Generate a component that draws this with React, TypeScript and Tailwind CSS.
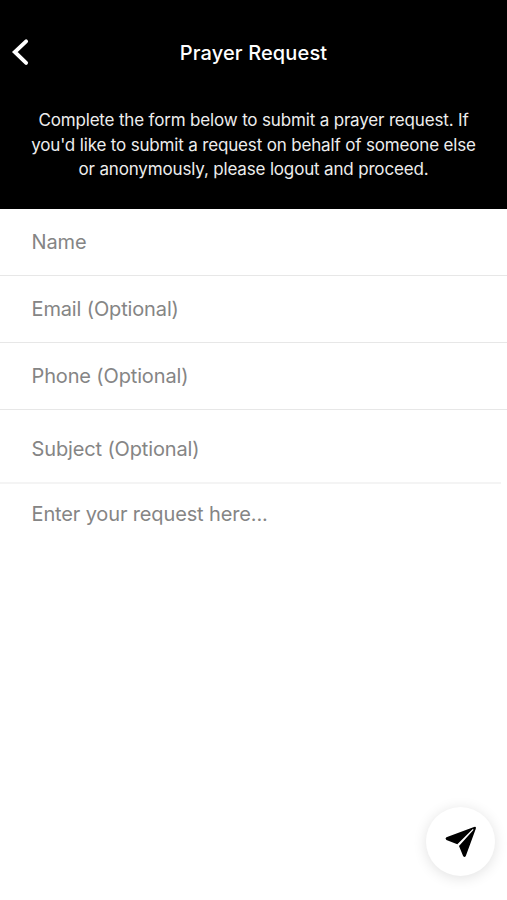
import React from 'react';

const INTRO_LINES = [
  'Complete the form below to submit a prayer request. If',
  "you'd like to submit a request on behalf of someone else",
  'or anonymously, please logout and proceed.',
];

const FIELDS = [
  { id: 'name', label: 'Name' },
  { id: 'email', label: 'Email (Optional)' },
  { id: 'phone', label: 'Phone (Optional)' },
];

const Header = () => {
  return (
    <header className="h-[209px] bg-black text-white">
      <div className="grid h-[104px] grid-cols-[80px_1fr_80px] items-center">
        <button type="button" aria-label="Back" className="pl-[11px]">
          <svg width="20" height="28" viewBox="0 0 20 28" fill="none">
            <path
              d="M15.1 3.3 L3.8 14 L15.1 24.9"
              stroke="white"
              strokeWidth="3.9"
              strokeLinecap="round"
            />
          </svg>
        </button>
        <h1 className="whitespace-nowrap pt-px text-center text-[20px] font-medium tracking-[0.13px]">
          Prayer Request
        </h1>
      </div>
      <div className="pt-[4px] text-center text-[17px] leading-[24.5px] tracking-[-0.165px] text-[#ededed]">
        {INTRO_LINES.map((line) => (
          <p key={line} className="whitespace-nowrap">
            {line}
          </p>
        ))}
      </div>
    </header>
  );
};

const SendButton = () => {
  return (
    <button
      type="button"
      aria-label="Send"
      className="absolute right-[12px] bottom-[24px] flex size-[69px] items-center justify-center rounded-full bg-white shadow-[0_2px_14px_rgba(0,0,0,0.12)]"
    >
      <svg width="34" height="34" viewBox="0 0 34 34" fill="black">
        <path d="M30 1.9 Q32.6 1 31.8 3.7 L21.8 31 Q20.6 33 19.1 31 L15 21 L29.6 4.7 L28.8 4 L13.3 19.2 L2.4 15 Q0.6 13.6 2.4 12.3 Z" />
      </svg>
    </button>
  );
};

export default function App() {
  return (
    <div className="relative h-[900px] w-[507px] overflow-hidden bg-white font-['Inter',sans-serif]">
      <Header />
      <main className="text-[20px] tracking-[-0.14px] text-[#858585]">
        {FIELDS.map((field) => (
          <div
            key={field.id}
            className="flex h-[67px] items-center border-b border-[#e7e7e7] pl-[31.5px]"
          >
            {field.label}
          </div>
        ))}
        <div className="mr-[6px] flex h-[74px] items-center border-b-2 border-[#f4f4f4] pt-[6px] pl-[31.5px]">
          Subject (Optional)
        </div>
        <div className="pt-[15px] pl-[31.5px]">Enter your request here...</div>
      </main>
      <SendButton />
    </div>
  );
}
